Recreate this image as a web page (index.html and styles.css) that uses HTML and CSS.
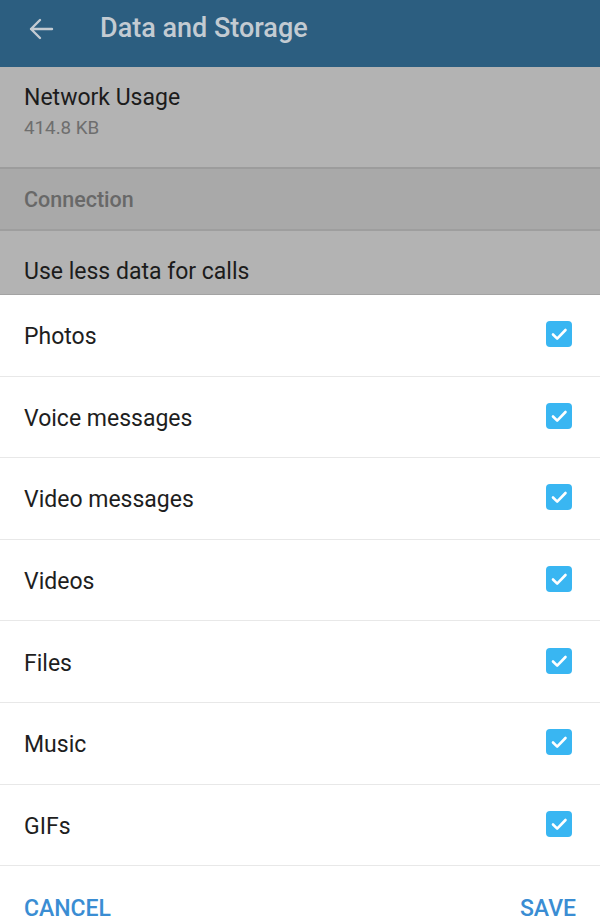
FILE: index.html
```html
<!DOCTYPE html>
<html>
<head>
<meta charset="utf-8">
<link rel="stylesheet" href="styles.css">
</head>
<body>
<div class="screen">
  <header class="appbar">
    <svg class="back" width="26" height="22" viewBox="0 0 26 22"><path d="M24 11H3M12 2L3 11l9 9" fill="none" stroke="#c3cbd2" stroke-width="2.4" stroke-linecap="round" stroke-linejoin="round"/></svg>
    <div class="title">Data and Storage</div>
  </header>
  <div class="dim">
    <div class="usage">
      <div class="usage-title">Network Usage</div>
      <div class="usage-sub">414.8 KB</div>
    </div>
    <div class="section">Connection</div>
    <div class="calls">Use less data for calls</div>
  </div>
  <div class="sheet">
    <div class="row"><span>Photos</span><span class="check"><svg viewBox="0 0 26 26" width="26" height="26"><path d="M7 13.5l4.2 4.2L19.5 9" fill="none" stroke="#fff" stroke-width="2.6" stroke-linecap="round" stroke-linejoin="round"/></svg></span></div>
    <div class="row"><span>Voice messages</span><span class="check"><svg viewBox="0 0 26 26" width="26" height="26"><path d="M7 13.5l4.2 4.2L19.5 9" fill="none" stroke="#fff" stroke-width="2.6" stroke-linecap="round" stroke-linejoin="round"/></svg></span></div>
    <div class="row"><span>Video messages</span><span class="check"><svg viewBox="0 0 26 26" width="26" height="26"><path d="M7 13.5l4.2 4.2L19.5 9" fill="none" stroke="#fff" stroke-width="2.6" stroke-linecap="round" stroke-linejoin="round"/></svg></span></div>
    <div class="row"><span>Videos</span><span class="check"><svg viewBox="0 0 26 26" width="26" height="26"><path d="M7 13.5l4.2 4.2L19.5 9" fill="none" stroke="#fff" stroke-width="2.6" stroke-linecap="round" stroke-linejoin="round"/></svg></span></div>
    <div class="row"><span>Files</span><span class="check"><svg viewBox="0 0 26 26" width="26" height="26"><path d="M7 13.5l4.2 4.2L19.5 9" fill="none" stroke="#fff" stroke-width="2.6" stroke-linecap="round" stroke-linejoin="round"/></svg></span></div>
    <div class="row"><span>Music</span><span class="check"><svg viewBox="0 0 26 26" width="26" height="26"><path d="M7 13.5l4.2 4.2L19.5 9" fill="none" stroke="#fff" stroke-width="2.6" stroke-linecap="round" stroke-linejoin="round"/></svg></span></div>
    <div class="row"><span>GIFs</span><span class="check"><svg viewBox="0 0 26 26" width="26" height="26"><path d="M7 13.5l4.2 4.2L19.5 9" fill="none" stroke="#fff" stroke-width="2.6" stroke-linecap="round" stroke-linejoin="round"/></svg></span></div>
    <div class="actions"><span>CANCEL</span><span>SAVE</span></div>
  </div>
</div>
</body>
</html>
```
FILE: styles.css
```css
* { box-sizing: border-box; }
html, body { margin: 0; padding: 0; }
body { font-family: Roboto, "Noto Sans", sans-serif; background: #fff; width: 600px; height: 923px; overflow: hidden; }
.screen { width: 600px; }
.appbar { height: 67px; background: #2c5e80; display: flex; align-items: center; padding: 0 0 12px 28px; }
.back { display: block; margin-right: 46px; margin-top: 2px; }
.title { color: #c3cbd2; font-size: 27px; font-weight: 500; }
.dim { background: #b3b3b3; }
.usage { height: 102px; padding: 16px 24px 0; border-bottom: 2px solid #9c9c9c; }
.usage-title { font-size: 23px; color: #1c1c1c; line-height: 30px; }
.usage-sub { font-size: 18.8px; color: #6e6e6e; margin-top: 3px; line-height: 24px; }
.section { height: 62px; background: #a9a9a9; border-bottom: 2px solid #9e9e9e; padding: 0 24px; display: flex; align-items: center; font-size: 21.5px; font-weight: 500; color: #686868; }
.calls { height: 64px; padding: 26px 24px 0; font-size: 23px; color: #1c1c1c; line-height: 30px; border-bottom: 1px solid #a3a3a3; }
.sheet { background: #fff; }
.row { height: 81.6px; display: flex; align-items: center; justify-content: space-between; padding: 0 28px 0 24px; font-size: 23px; color: #1e1e1e; border-bottom: 1px solid #e8e8e8; }
.row span:first-child { margin-top: 3px; }
.check { width: 26px; height: 26px; border-radius: 4px; background: #39b6f2; display: flex; margin-top: -2px; }
.check svg { display: block; }
.actions { display: flex; justify-content: space-between; padding: 29px 24px 0; font-size: 23px; font-weight: 500; color: #3a8dd3; }
```
